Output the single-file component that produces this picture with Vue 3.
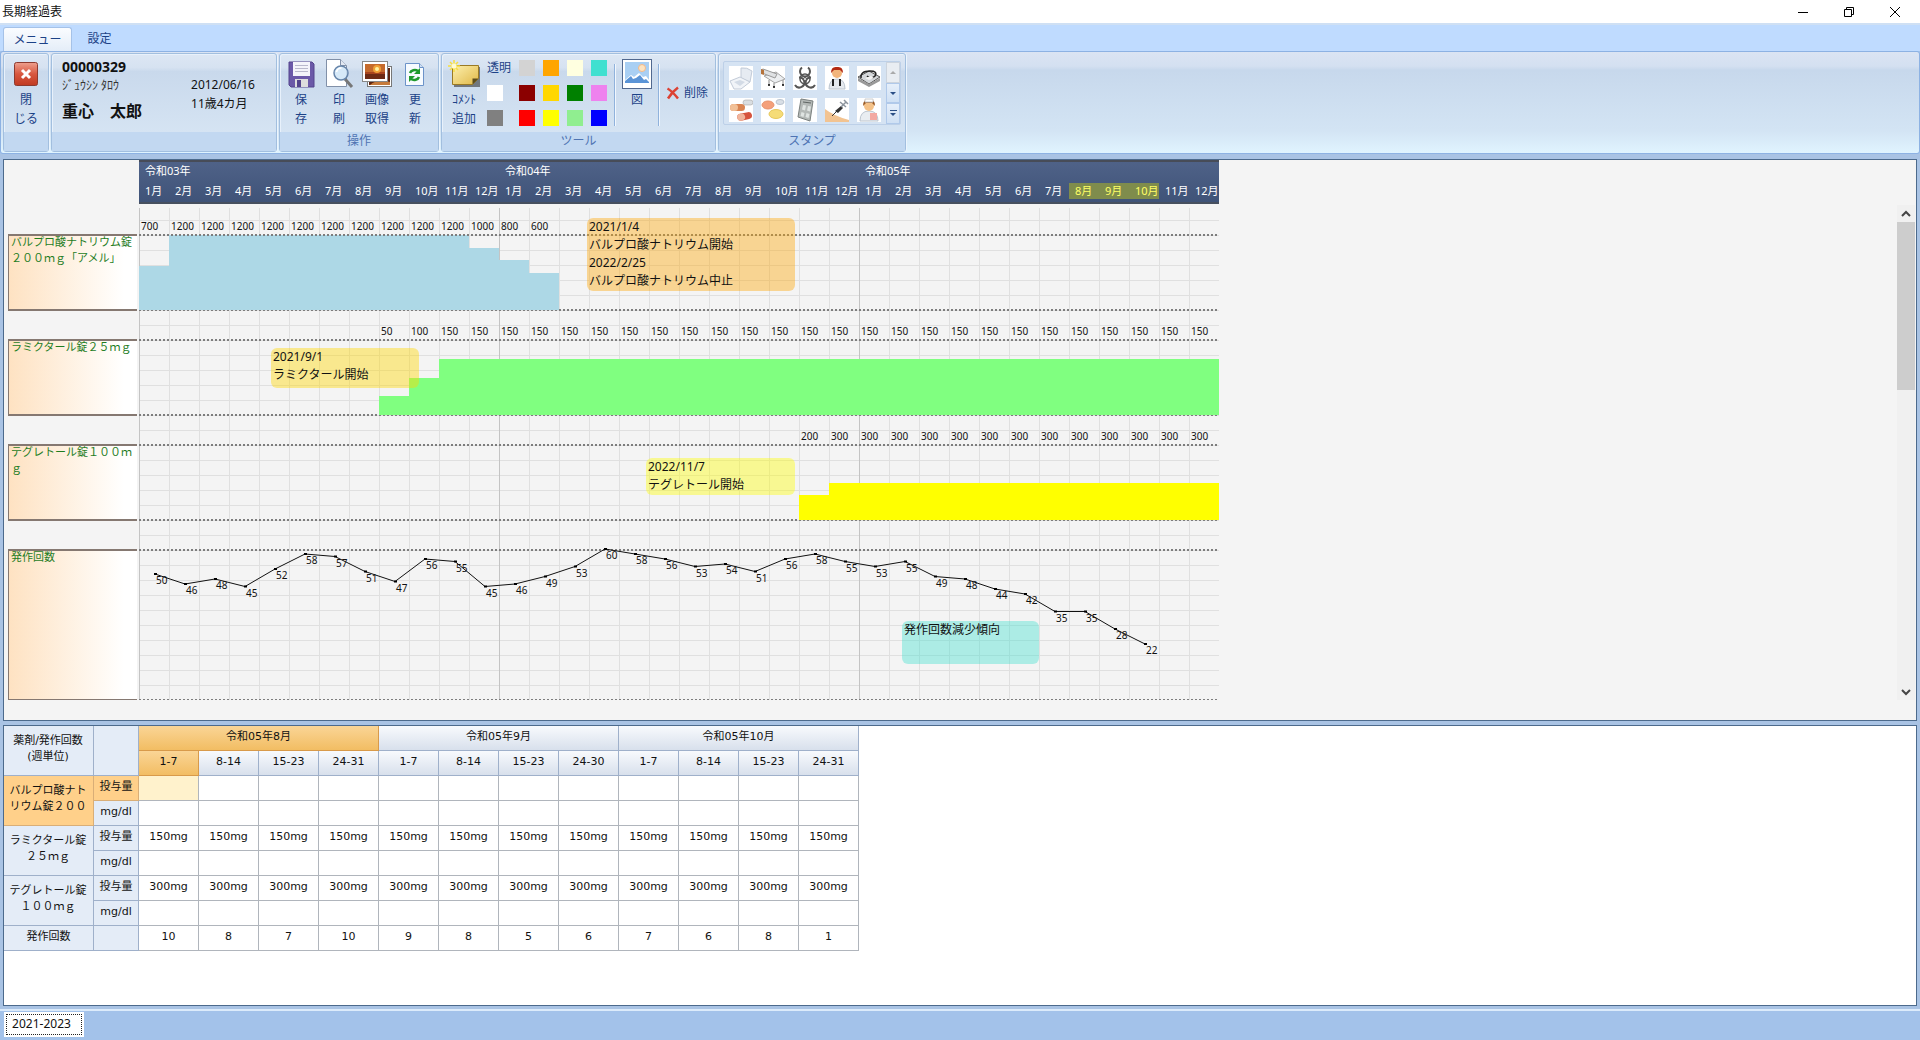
<script setup>
const MONTH = 30
const years = ['令和03年', '令和04年', '令和05年']
const months = Array.from({ length: 36 }, (_, i) => ({
  name: `${(i % 12) + 1}月`,
  selected: i >= 31 && i <= 33,
}))

const fill = (n, v) => Array(n).fill(v)
const drugs = [
  { name: 'バルプロ酸ナトリウム錠２００ｍｇ「アメル」', base: 106, max: 1200, start: 0, color: '#add8e6', doses: [700, ...fill(10, 1200), 1000, 800, 600] },
  { name: 'ラミクタール錠２５ｍｇ', base: 211, max: 200, start: 8, color: '#80ff80', doses: [50, 100, ...fill(26, 150)] },
  { name: 'テグレトール錠１００ｍｇ', base: 316, max: 600, start: 22, color: '#ffff00', doses: [200, ...fill(13, 300)] },
]
const bars = drugs.flatMap((d) =>
  d.doses.map((v, i) => ({
    v,
    x: (d.start + i) * MONTH,
    y: d.base - (v / d.max) * 75,
    h: (v / d.max) * 75,
    labelY: d.base - 80,
    color: d.color,
  })),
)

const seizures = [50, 46, 48, 45, 52, 58, 57, 51, 47, 56, 55, 45, 46, 49, 53, 60, 58, 56, 53, 54, 51, 56, 58, 55, 53, 55, 49, 48, 44, 42, 35, 35, 28, 22]
const points = seizures.map((v, i) => ({ v, x: i * MONTH + 16, y: 495 - v * 2.5 }))
const line = points.map((p) => `${p.x},${p.y}`).join(' ')

const notes = [
  { lines: ['2021/1/4', 'バルプロ酸ナトリウム開始', '2022/2/25', 'バルプロ酸ナトリウム中止'], x: 448, y: 14, w: 208, h: 73, bg: 'rgba(255,165,0,.4)' },
  { lines: ['2021/9/1', 'ラミクタール開始'], x: 132, y: 144, w: 148, h: 40, bg: 'rgba(255,215,0,.42)' },
  { lines: ['2022/11/7', 'テグレトール開始'], x: 507, y: 254, w: 149, h: 37, bg: 'rgba(255,255,0,.4)' },
  { lines: ['発作回数減少傾向'], x: 763, y: 417, w: 137, h: 43, bg: 'rgba(64,224,208,.4)' },
]

const swatches = [
  ['lightgray', 'orange', 'lightyellow', 'turquoise'],
  ['white', 'darkred', 'gold', 'green', 'violet'],
  ['gray', 'red', 'yellow', 'lightgreen', 'blue'],
]

const weekMonths = ['令和05年8月', '令和05年9月', '令和05年10月']
const weeks = ['1-7', '8-14', '15-23', '24-31', '1-7', '8-14', '15-23', '24-30', '1-7', '8-14', '15-23', '24-31']
const rows = [
  { name: drugs[0].name.slice(0, 14), dose: '', on: true },
  { name: drugs[1].name, dose: '150mg' },
  { name: drugs[2].name, dose: '300mg' },
]
const weekly = [10, 8, 7, 10, 9, 8, 5, 6, 7, 6, 8, 1]
</script>

<template>
  <div class="app">
    <header class="titlebar">
      <span>長期経過表</span>
      <div class="winbtns">
        <button aria-label="最小化"><svg width="12" height="12"><path d="M1 6.500H11" stroke="#000" /></svg></button>
        <button aria-label="元に戻す"><svg width="12" height="12" fill="none" stroke="#000"><path d="M1.500 3.500h7v7h-7zM3.500 3.500v-2h7v7h-2" /></svg></button>
        <button aria-label="閉じる"><svg width="12" height="12" stroke="#000"><path d="M1 1l10 10M11 1L1 11" /></svg></button>
      </div>
    </header>

    <nav class="tabs">
      <button class="tab on">メニュー</button>
      <button class="tab">設定</button>
    </nav>

    <section class="ribbon">
      <div class="group g-close">
        <div class="body">
          <button class="tool">
            <span class="ico">
              <svg width="24" height="24"><defs><linearGradient id="rd" x2="0" y2="1"><stop offset="0" stop-color="#eea08e" /><stop offset=".5" stop-color="#d8573f" /><stop offset="1" stop-color="#c03a22" /></linearGradient></defs><rect x=".5" y=".5" width="23" height="23" rx="2" fill="url(#rd)" stroke="#8d3b30" /><path d="M8 8l8 8M16 8l-8 8" stroke="#fff" stroke-width="3" /></svg>
            </span>
            <span>閉<br>じる</span>
          </button>
        </div>
        <div class="foot"></div>
      </div>

      <div class="group g-patient">
        <div class="body patient">
          <div>
            <div class="pid">00000329</div>
            <div class="kana">ｼﾞｭｳｼﾝ ﾀﾛｳ</div>
            <div class="pname">重心　太郎</div>
          </div>
          <div class="birth">2012/06/16<br>11歳4カ月</div>
        </div>
        <div class="foot"></div>
      </div>

      <div class="group g-ops">
        <div class="body ops">
          <button class="tool">
            <span class="ico">
              <svg width="27" height="27"><path d="M1 1h23l2 2v23H3l-2-2z" fill="#6b59a8" stroke="#54448c" /><rect x="5" y="1" width="17" height="14" fill="#f4f4fa" /><path d="M7 4.500h13M7 7.500h13M7 10.500h13" stroke="#b9b9cc" /><rect x="7" y="18" width="13" height="8" fill="#ddd" /><rect x="9" y="19" width="4" height="7" fill="#54448c" /></svg>
            </span>
            <span>保<br>存</span>
          </button>
          <button class="tool">
            <span class="ico">
              <svg width="30" height="30"><path d="M2.500 .5h14l6 6v21h-20z" fill="#fff" stroke="#8190a8" /><path d="M16.500 .5v6h6" fill="#e2e8f2" stroke="#8190a8" /><path d="M21 20l7 8" stroke="#777" stroke-width="3" /><circle cx="17" cy="14" r="7" fill="#cfe5f7" fill-opacity=".85" stroke="#6685aa" stroke-width="1.500" /><path d="M12.500 13a5 5 0 0 1 5-4" fill="none" stroke="#fff" stroke-width="1.500" /></svg>
            </span>
            <span>印<br>刷</span>
          </button>
          <button class="tool">
            <span class="ico">
              <svg width="30" height="27"><rect x="5.500" y="5.500" width="24" height="20" fill="#fff" stroke="#777" /><rect x="7" y="7" width="21" height="17" fill="#5d2410" /><path d="M8 24c4-4 10-5 20-3v3z" fill="#c67a3a" /><rect x=".5" y=".5" width="25" height="20" fill="#fff" stroke="#888" /><rect x="3" y="3" width="20" height="15" fill="#a8441d" /><rect x="3" y="3" width="20" height="8" fill="#c56a2c" /><rect x="3" y="13" width="20" height="5" fill="#6d2a14" /><circle cx="15" cy="8" r="4" fill="#f0a036" /><circle cx="15" cy="8" r="2" fill="#fff3a0" /></svg>
            </span>
            <span>画像<br>取得</span>
          </button>
          <button class="tool">
            <span class="ico">
              <svg width="20" height="26"><path d="M.5 2.500h14l4 4v18H.5z" fill="#f7fbff" stroke="#6c93c9" /><path d="M14.500 2.500v4h4" fill="#cfdff2" stroke="#6c93c9" /><path d="M5 12a5 4 0 0 1 8-2" fill="none" stroke="#1f9a2c" stroke-width="2.500" /><path d="M15 7v6H9z" fill="#1f9a2c" /><path d="M14 16a5 4 0 0 1-8 2" fill="none" stroke="#1f9a2c" stroke-width="2.500" /><path d="M4 21v-6h6z" fill="#1f9a2c" /></svg>
            </span>
            <span>更<br>新</span>
          </button>
        </div>
        <div class="foot">操作</div>
      </div>

      <div class="group g-tools">
        <div class="body tools">
          <button class="tool">
            <span class="ico">
              <svg width="32" height="28"><defs><linearGradient id="nt" x2="1" y2="1"><stop offset="0" stop-color="#fdf0ae" /><stop offset="1" stop-color="#e0b848" /></linearGradient></defs><path d="M6 7h27v20H6z" fill="#333" opacity=".6" /><path d="M4.500 5.500h26v13l-6 6h-20z" fill="url(#nt)" stroke="#9a7a25" /><path d="M24.500 24.500v-6h6z" fill="#5c4c1c" /><path d="M6 0v12M0 6h12M2 2l8 8M10 2l-8 8" stroke="#f7de3e" stroke-width="1.500" /><circle cx="6" cy="6" r="2.500" fill="#fffbd0" /></svg>
            </span>
            <span>ｺﾒﾝﾄ<br>追加</span>
          </button>
          <div class="palette">
            <button class="clear">透明</button>
            <template v-for="row in swatches">
              <button v-for="c in row" :key="c" class="swatch" :aria-label="c" :style="{ background: c }"></button>
            </template>
          </div>
          <div class="sep"></div>
          <button class="tool figure">
            <span class="ico">
              <svg width="30" height="30"><rect x=".5" y=".5" width="29" height="29" fill="#fff" stroke="#51688f" /><rect x="3" y="3" width="24" height="21" fill="#a9cff3" /><circle cx="20" cy="9" r="3.500" fill="#fde3c0" stroke="#f4b988" /><path d="M3 21l6-5 3 2 5-4 4 4 3-1 3 4v3H3z" fill="#fff" /><path d="M3 22l6-5 2 3 3-1 4-3 4 5 2-1 3 3v1H3z" fill="#5b94d6" /></svg>
            </span>
            <span>図</span>
          </button>
          <div class="sep"></div>
          <button class="delete">
            <svg width="14" height="14"><path d="M1.500 2.500Q6 5 12 12.500M12 1.500Q6 6 2 12.500" fill="none" stroke="#dc4234" stroke-width="2.500" /></svg>
            削除
          </button>
        </div>
        <div class="foot">ツール</div>
      </div>

      <div class="group g-stamps">
        <div class="body">
          <div class="gallery">
            <div class="stamps">
              <button aria-label="便器"><svg width="24" height="24"><path d="M12 2q6-1 11 3l-2 11-9-4z" fill="#e6ebf2" stroke="#c2cbd8" /><path d="M1 15l10-4 10 5-9 7H5z" fill="#f1f4f8" stroke="#c2cbd8" /><path d="M5 16l6-2 5 2-5 4z" fill="#d3dbe6" /></svg></button>
              <button aria-label="ベッド"><svg width="24" height="24"><path d="M3 10l12-4 9 7-10 4z" fill="#eceef0" stroke="#a5a5a5" /><path d="M0 4l2-1 14 5-2 4L1 7z" fill="#dfe1e3" stroke="#999" /><path d="M0 3l3 1v5l-3-1z" fill="#b5733c" /><path d="M8 14v5M13 17v4M22 14v5" stroke="#888" /><circle cx="8" cy="19" r="1" /><circle cx="13" cy="21" r="1" /><circle cx="22" cy="19" r="1" /></svg></button>
              <button aria-label="感染"><svg width="24" height="24" fill="none" stroke="#555" stroke-width="2"><path d="M9 1.500a5 5 0 1 0 6 0" /><path d="M2 19a5 5 0 1 0 4-7.500" /><path d="M22 19a5 5 0 1 1-4-7.500" /><circle cx="12" cy="13" r="5" stroke-width="1.500" /><circle cx="12" cy="13" r="1.500" fill="#fff" stroke-width="1" /></svg></button>
              <button aria-label="医師"><svg width="24" height="24"><path d="M4 23q0-10 8-10t8 10z" fill="#e5e9ee" stroke="#bcc5cf" /><circle cx="12" cy="7" r="5" fill="#f2b57c" /><path d="M6 7q0-7 6-6 6-1 6 6l-3-3H9z" fill="#b42a12" /><path d="M8 13v7M15 13v7" stroke="#222" stroke-width="2" /></svg></button>
              <button aria-label="血圧計"><svg width="24" height="24"><path d="M1 11l11-6 11 6-11 7z" fill="#d4d7da" stroke="#555" /><path d="M1 12v3l11 6 11-6v-3l-11 6z" fill="#999" /><path d="M4 12q-1-7 9-7 8 0 5 5-4 4-8 0" fill="none" stroke="#222" stroke-width="1.500" /><path d="M8 12l6-2 3 2-5 2z" fill="#f3f3f3" /></svg></button>
              <button aria-label="カプセル"><svg width="24" height="24"><rect x="14" y="2" width="10" height="5" rx="2.500" fill="#d9dde0" stroke="#999" stroke-width=".5" /><rect x="1" y="6" width="15" height="7" rx="3.500" fill="#d98452" /><rect x="1" y="6" width="8" height="7" rx="3.500" fill="#f1c097" /><rect x="8" y="15" width="15" height="7" rx="3.500" fill="#d6543e" transform="rotate(-12 15 18)" /><rect x="8" y="15" width="8" height="7" rx="3.500" fill="#f0b59c" transform="rotate(-12 15 18)" /></svg></button>
              <button aria-label="錠剤"><svg width="24" height="24"><ellipse cx="7" cy="7" rx="6" ry="4" fill="#f4a07a" stroke="#e6926c" /><ellipse cx="19" cy="4" rx="4" ry="2.500" fill="#d9dfe6" stroke="#b9c3cf" /><ellipse cx="15" cy="16" rx="7" ry="4.500" fill="#f5dc78" stroke="#e6c85c" /></svg></button>
              <button aria-label="レントゲン"><svg width="24" height="24"><path d="M8 1l12 2-3 20-12-4z" fill="#b4b9b7" stroke="#7b817f" /><path d="M10 4l8 1" stroke="#5f6563" /><path d="M10 7l3 .5-1 5-3-1zM15 8l3 .5-1 5-3-1zM8.500 14l3 1-1 4-3-1zM13.500 15l3 1-1 4-3-1z" fill="#dfe4e2" /></svg></button>
              <button aria-label="注射"><svg width="24" height="24"><path d="M0 11q9 7 24 11v2H0z" fill="#f2c391" /><path d="M7 18l6-6" stroke="#333" /><path d="M10 13l6-5 2 2-5 5z" fill="#333" /><path d="M16 9l5-5M15 4l6 5M19 2l4 4" stroke="#8c949d" stroke-width="1.500" /></svg></button>
              <button aria-label="看護師"><svg width="24" height="24"><path d="M3 23q0-10 9-10t9 10z" fill="#e9edf1" stroke="#bcc5cf" /><circle cx="12" cy="8" r="5" fill="#f5c288" /><path d="M6 8q0-7 6-7t6 7l-3-3H9z" fill="#9b5a24" /><path d="M8 1h8v3H8z" fill="#fff" stroke="#ccc" /><path d="M13 15h7v7h-7z" fill="#f3a9a2" /></svg></button>
            </div>
            <div class="spin">
              <button aria-label="上へ" class="off"><svg width="7" height="5"><path d="M0 4l3-3 3 3z" fill="#aaa" /></svg></button>
              <button aria-label="下へ"><svg width="7" height="5"><path d="M0 1l3 3 3-3z" fill="#2b4f86" /></svg></button>
              <button aria-label="一覧"><svg width="7" height="7"><path d="M0 .5h7" stroke="#2b4f86" /><path d="M0 3l3 3 3-3z" fill="#2b4f86" /></svg></button>
            </div>
          </div>
        </div>
        <div class="foot">スタンプ</div>
      </div>
    </section>

    <main class="work">
      <section class="panel chart">
        <div class="lanes">
          <div v-for="d in drugs" :key="d.name" class="lane">{{ d.name }}</div>
          <div class="lane tall">発作回数</div>
        </div>
        <div class="timeline">
          <div class="head">
            <div class="years"><span v-for="y in years" :key="y">{{ y }}</span></div>
            <div class="months"><span v-for="(m, i) in months" :key="i" :class="{ sel: m.selected }">{{ m.name }}</span></div>
          </div>
          <div class="plot">
            <svg width="1080" height="516">
              <g shape-rendering="crispEdges">
                <path v-for="n in 32" :key="'h' + n" :d="`M0 ${n * 15 + 1.5}H1080`" class="grid" />
                <path v-for="n in 36" :key="'v' + n" :d="`M${(n - 1) * 30 + 0.5} 4V496`" :class="['grid', { year: (n - 1) % 12 === 0 }]" />
                <path v-for="d in drugs" :key="d.base" :d="`M0 ${d.base}H1080`" class="dots" />
              </g>
              <rect v-for="(b, i) in bars" :key="'b' + i" :x="b.x" :y="b.y" width="30" :height="b.h" :fill="b.color" shape-rendering="crispEdges" />
              <g shape-rendering="crispEdges">
                <path v-for="d in drugs" :key="d.base" :d="`M0 ${d.base - 75}H1080`" class="dots" />
                <path d="M0 346H1080" class="dots" />
                <path d="M0 495.500H1080" class="dots thin" />
              </g>
              <text v-for="(b, i) in bars" :key="'t' + i" :x="b.x + 2" :y="b.labelY">{{ b.v }}</text>
              <polyline :points="line" fill="none" stroke="#111" />
              <g v-for="(p, i) in points" :key="'p' + i">
                <rect :x="p.x - 1" :y="p.y - 1" width="3" height="2" fill="#000" />
                <text :x="p.x + 1" :y="p.y + 10">{{ p.v }}</text>
              </g>
            </svg>
            <div v-for="n in notes" :key="n.lines[0]" class="note" :style="{ left: n.x + 'px', top: n.y + 'px', width: n.w + 'px', height: n.h + 'px', background: n.bg }">
              <div v-for="l in n.lines" :key="l">{{ l }}</div>
            </div>
          </div>
        </div>
        <div class="scroll">
          <button aria-label="上へスクロール"><svg width="10" height="8"><path d="M1 6l4-4 4 4" fill="none" stroke="#444" stroke-width="2" /></svg></button>
          <div class="track"><div class="thumb"></div></div>
          <button aria-label="下へスクロール"><svg width="10" height="8"><path d="M1 2l4 4 4-4" fill="none" stroke="#444" stroke-width="2" /></svg></button>
        </div>
      </section>

      <section class="panel weekly">
        <table>
          <colgroup><col class="c-name"><col class="c-kind"><col v-for="n in 12" :key="n" class="c-week"></colgroup>
          <thead>
            <tr>
              <th rowspan="2" class="side">薬剤/発作回数<br>(週単位)</th>
              <th rowspan="2" class="side"></th>
              <th v-for="(m, i) in weekMonths" :key="m" colspan="4" :class="{ on: i === 0 }">{{ m }}</th>
            </tr>
            <tr><th v-for="(w, i) in weeks" :key="i" :class="{ on: i === 0 }">{{ w }}</th></tr>
          </thead>
          <tbody>
            <template v-for="r in rows" :key="r.name">
              <tr>
                <th rowspan="2" :class="['side', { active: r.on }]">{{ r.name }}</th>
                <th :class="['side', { active: r.on }]">投与量</th>
                <td v-for="(w, i) in weeks" :key="i" :class="{ cur: r.on && i === 0 }">{{ r.dose }}</td>
              </tr>
              <tr>
                <th class="side">mg/dl</th>
                <td v-for="(w, i) in weeks" :key="i"></td>
              </tr>
            </template>
            <tr>
              <th class="side">発作回数</th>
              <th class="side"></th>
              <td v-for="(v, i) in weekly" :key="i">{{ v }}</td>
            </tr>
          </tbody>
        </table>
      </section>
    </main>

    <footer class="sheets"><button>2021-2023</button></footer>
  </div>
</template>

<style>
body {
  margin: 0;
}
</style>

<style scoped>
.app {
  min-height: 100vh;
  display: flex;
  flex-direction: column;
  background: #a3c2ea;
  font: 12px/18px "Noto Sans", "Noto Sans CJK JP", sans-serif;
  color: #111;
}
.app * {
  box-sizing: border-box;
}
button {
  border: 0;
  padding: 0;
  margin: 0;
  background: none;
  font: inherit;
  color: inherit;
}
svg {
  display: block;
}

.titlebar {
  height: 23px;
  display: flex;
  justify-content: space-between;
  align-items: center;
  padding-left: 2px;
  background: #fff;
}
.winbtns {
  display: flex;
  margin-right: 2px;
}
.winbtns button {
  width: 46px;
  height: 20px;
  display: grid;
  place-items: center;
}

.tabs {
  height: 28px;
  display: flex;
  align-items: flex-end;
  padding-left: 3px;
  border-top: 2px solid #cfe0f4;
  background: #bfdbff;
}
.tab {
  height: 24px;
  width: 55px;
  color: #1c4287;
}
.tab.on {
  width: 69px;
  background: linear-gradient(#fafcff, #e4edf8);
  border: 1px solid #a5c2e8;
  border-bottom: 0;
  border-radius: 3px 3px 0 0;
}

.ribbon {
  display: flex;
  gap: 2px;
  padding: 1px 2px;
  height: 103px;
  border: 1px solid #8db2e3;
  border-radius: 3px;
  background: linear-gradient(#dbe4f3, #d4e0f1 14%, #c7d8ec 18%, #d3e4f4 78%, #e0f4ff);
}
.group {
  display: flex;
  flex-direction: column;
  border: 1px solid #a2bfdf;
  border-radius: 3px;
  background: linear-gradient(#dde7f4, #d6e2f1 14%, #c9d9ec 18%, #d9e7f5);
  box-shadow: inset 1px 1px 0 #e8f1fb, 1px 0 0 #ecf5fd;
}
.g-close { width: 46px; }
.g-patient { width: 226px; }
.g-ops { width: 160px; }
.g-tools { width: 275px; }
.g-stamps { width: 188px; }
.body {
  flex: 1;
  padding-top: 5px;
  display: flex;
  justify-content: center;
  color: #1c4287;
}
.foot {
  height: 19px;
  background: #c2d8f1;
  color: #4f74b3;
  text-align: center;
  line-height: 18px;
}
.tool {
  display: flex;
  flex-direction: column;
  align-items: center;
  gap: 1px;
  line-height: 19px;
}
.ico {
  height: 30px;
  display: flex;
  align-items: center;
}
.patient {
  justify-content: flex-start;
  gap: 49px;
  padding-left: 10px;
  color: #111;
}
.pid {
  font-size: 14px;
  font-weight: 700;
  line-height: 16px;
}
.kana {
  line-height: 22px;
  color: #333;
}
.pname {
  font-size: 16px;
  font-weight: 700;
  line-height: 28px;
}
.birth {
  padding-top: 16px;
  line-height: 19px;
}
.ops {
  justify-content: flex-start;
  padding-left: 2px;
}
.ops .tool {
  width: 38px;
}
.tools {
  justify-content: flex-start;
  padding-left: 5px;
}
.tools > .tool {
  width: 34px;
}
.palette {
  display: grid;
  grid-template-columns: 32px repeat(4, 24px);
  grid-auto-rows: 16px;
  row-gap: 9px;
  align-content: start;
  margin-left: 6px;
  padding-top: 1px;
}
.clear {
  width: 24px;
  height: 16px;
  line-height: 16px;
}
.swatch {
  width: 16px;
  height: 16px;
}
.sep {
  width: 2px;
  height: 62px;
  margin-top: 5px;
  background: linear-gradient(90deg, #90b2dc 50%, #f1f7fe 50%);
}
.palette + .sep {
  margin-left: -1px;
}
.tools > .figure {
  width: 42px;
}
.delete {
  display: flex;
  align-items: center;
  gap: 4px;
  height: 68px;
  margin-left: 6px;
}
.gallery {
  display: flex;
  width: 178px;
  height: 64px;
  margin-top: 2px;
  border: 1px solid #bdd0e8;
  border-radius: 2px;
  background: #d5e3f3;
}
.stamps {
  flex: 1;
  display: grid;
  grid-template-columns: repeat(5, 24px);
  grid-auto-rows: 24px;
  gap: 8px;
  padding: 4px 5px;
}
.stamps button {
  background: #fff;
}
.spin {
  width: 14px;
  display: flex;
  flex-direction: column;
}
.spin button {
  flex: 1;
  display: grid;
  place-items: center;
  border: 1px solid #b0c9ea;
  background: linear-gradient(#e6effa, #cfe0f4);
}
.spin .off {
  background: #e9edf2;
  border-color: #ccd4de;
}

.work {
  flex: 1;
  display: flex;
  flex-direction: column;
  gap: 4px;
  padding: 5px 3px 3px;
  background: #a9c3e4;
}
.panel {
  border: 1px solid #4c6a8c;
  background: #f4f4f4;
}
.chart {
  display: flex;
}
.lanes {
  width: 135px;
  display: flex;
  flex-direction: column;
  gap: 28px;
  padding: 74px 2px 0 4px;
}
.lane {
  height: 77px;
  padding-left: 2px;
  border: 2px solid #857871;
  border-width: 0 0 2px 1px;
  box-shadow: inset 0 2px 0 #857871;
  background: linear-gradient(90deg, #fee2c2, #fff 90%);
  color: #1f7d1f;
  font-size: 11px;
  line-height: 16px;
  word-break: break-all;
}
.lane.tall {
  height: 151px;
  border-bottom-width: 1px;
}
.timeline {
  width: 1080px;
}
.head {
  height: 44px;
  border-top: 2px solid #474c58;
  border-bottom: 2px solid #47505f;
  background: linear-gradient(#4f6288, #3f5378);
  color: #fff;
  font-size: 11px;
}
.years {
  display: grid;
  grid-template-columns: repeat(3, 1fr);
  line-height: 18px;
}
.years span {
  padding-left: 6px;
}
.months {
  display: grid;
  grid-template-columns: repeat(36, 30px);
  padding-top: 3px;
  line-height: 16px;
  white-space: nowrap;
}
.months span {
  padding-left: 6px;
}
.months .sel {
  background: #7f8c4c;
  color: #ffff66;
}
.plot {
  position: relative;
}
.plot text {
  font-size: 10px;
  fill: #111;
}
.grid {
  stroke: #e0e0e0;
}
.grid.year {
  stroke: #c4c4c4;
}
.dots {
  stroke: #7d7d7d;
  stroke-width: 2;
  stroke-dasharray: 2 2;
}
.dots.thin {
  stroke-width: 1;
}
.note {
  position: absolute;
  padding-left: 2px;
  border-radius: 6px;
  white-space: nowrap;
}
.scroll {
  width: 18px;
  margin: 45px 1px 20px auto;
  display: flex;
  flex-direction: column;
  background: #f0f0f0;
}
.scroll button {
  height: 17px;
  display: grid;
  place-items: center;
}
.track {
  flex: 1;
}
.thumb {
  height: 168px;
  background: #cdcdcd;
}

.weekly {
  flex: 1;
  background: #fff;
}
table {
  width: 855px;
  table-layout: fixed;
  border-collapse: separate;
  border-spacing: 0;
  font: 11px/16px "DejaVu Sans", "Noto Sans CJK JP", sans-serif;
}
.c-name { width: 90px; }
.c-kind { width: 45px; }
.c-week { width: 60px; }
th,
td {
  height: 25px;
  padding: 0 0 3px;
  border: 0 solid #b0b5bc;
  border-width: 0 1px 1px 0;
  text-align: center;
  font-weight: 400;
}
th {
  border-color: #9fb0ca;
  background: linear-gradient(#f8fafd, #d8e0ec);
}
th.on {
  background: linear-gradient(#fad596, #f2bd63);
  border-color: #d89a4a;
}
th.side {
  background: #e4ecf7;
}
th.side[rowspan] {
  padding: 0 4px 3px 3px;
  word-break: break-all;
}
th.active {
  background: #ffd08a;
  border-color: #d9ae77;
}
td.cur {
  background: #fff2cc;
}

.sheets {
  height: 31px;
  padding: 1px 4px 0;
  border-top: 2px solid #dcebfb;
}
.sheets button {
  width: 80px;
  height: 25px;
  padding: 0 5px 1px 0;
  border: 1px solid #fff;
  background: #fff;
  outline: 1px dotted #222;
  outline-offset: -3px;
}
</style>
